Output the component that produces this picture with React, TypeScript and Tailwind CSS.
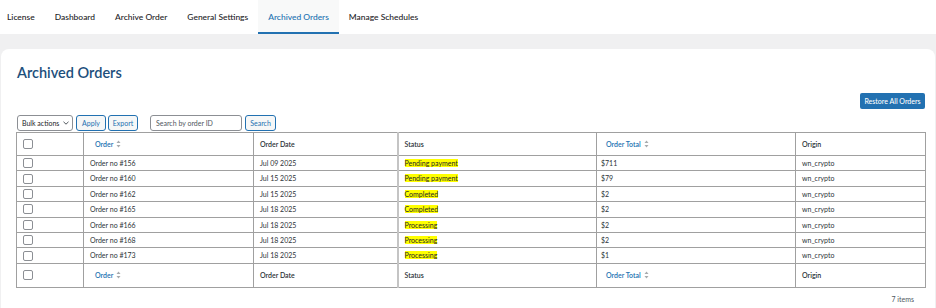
import React from "react";

const tabs = ["License", "Dashboard", "Archive Order", "General Settings", "Archived Orders", "Manage Schedules"];

const orders = [
  { id: 156, date: "Jul 09 2025", status: "Pending payment", total: "$711" },
  { id: 160, date: "Jul 15 2025", status: "Pending payment", total: "$79" },
  { id: 162, date: "Jul 15 2025", status: "Completed", total: "$2" },
  { id: 165, date: "Jul 18 2025", status: "Completed", total: "$2" },
  { id: 166, date: "Jul 18 2025", status: "Processing", total: "$2" },
  { id: 168, date: "Jul 18 2025", status: "Processing", total: "$2" },
  { id: 173, date: "Jul 18 2025", status: "Processing", total: "$1" },
];

const SortIcon = () => (
  <svg width="5" height="8" viewBox="0 0 5 8" className="inline-block ml-[3px] align-[-1px]">
    <path d="M2.5 0.5 L4.5 3 L0.5 3 Z" fill="#a7aaad" />
    <path d="M2.5 7.5 L4.5 5 L0.5 5 Z" fill="#a7aaad" />
  </svg>
);

const Checkbox = () => (
  <span className="block w-[10px] h-[10px] border border-[#8c8f94] rounded-[2px] bg-white" />
);

const HeadRow = ({ tall }: { tall: number }) => (
  <tr className={tall === 23 ? "h-[23px]" : "h-[24px]"}>
    <td className="border border-[#a0a0a0] pl-[6px] w-[67px]">
      <Checkbox />
    </td>
    <td className="border border-[#a0a0a0] pl-[11px] w-[170px] font-semibold text-[#2271b1]">
      Order
      <SortIcon />
    </td>
    <td className="border border-[#a0a0a0] pl-[6px] w-[144px] font-semibold">Order Date</td>
    <td className="border border-[#a0a0a0] border-l-2 border-l-[#c4c4c4] pl-[6px] w-[199px] font-semibold">Status</td>
    <td className="border border-[#a0a0a0] pl-[9px] w-[199px] font-semibold text-[#2271b1]">
      Order Total
      <SortIcon />
    </td>
    <td className="border border-[#a0a0a0] pl-[6px] w-[130px] font-semibold">Origin</td>
  </tr>
);

const App = () => {
  return (
    <div className="min-h-screen bg-[#f0f0f1] font-['Lato',sans-serif] text-[#1d2327]">
      <nav className="h-[34px] bg-white flex -ml-[3px]">
        {tabs.map((t) => (
          <div
            key={t}
            className={
              t === "Archived Orders"
                ? "px-[10px] flex items-center text-[8.45px] font-medium text-[#2271b1] bg-[#f8f9f9] border-b-2 border-[#2271b1] pt-[2px]"
                : "px-[10px] flex items-center text-[8.45px] font-medium text-[#1d2327]"
            }
          >
            {t}
          </div>
        ))}
      </nav>

      <div className="pt-[15px] pl-[1px] pr-[1px]">
        <div className="bg-white rounded-t-[8px] pl-[15px] pr-[10px] pt-[14px] min-h-[260px]">
          <h1 className="text-[14.5px] font-semibold text-[#1d4f7c] pl-[1px] leading-[20px]">Archived Orders</h1>

          <div className="flex justify-end mt-[10px]">
            <button className="h-[16px] w-[65px] rounded-[2px] bg-[#2271b1] text-white text-[7px] font-medium">
              Restore All Orders
            </button>
          </div>

          <div className="flex items-center mt-[6px] pl-[1px] h-[16px]">
            <div className="h-[16px] w-[56px] border border-[#8c8f94] rounded-[3px] flex items-center justify-between pl-[4px] pr-[3px] text-[7px]">
              <span>Bulk actions</span>
              <svg width="6" height="4" viewBox="0 0 6 4">
                <path d="M0.5 0.8 L3 3.2 L5.5 0.8" stroke="#3c434a" strokeWidth="0.9" fill="none" />
              </svg>
            </div>
            <button className="ml-[3px] h-[16px] w-[30px] border border-[#2271b1] rounded-[3px] bg-[#f6f7f7] text-[#2271b1] text-[7px]">
              Apply
            </button>
            <button className="ml-[2px] h-[16px] w-[30px] border border-[#2271b1] rounded-[3px] bg-[#f6f7f7] text-[#2271b1] text-[7px]">
              Export
            </button>
            <div className="ml-[12px] h-[16px] w-[92px] border border-[#8c8f94] rounded-[3px] flex items-center pl-[5px] text-[7px] text-[#50575e]">
              Search by order ID
            </div>
            <button className="ml-[3px] h-[16px] w-[31px] border border-[#2271b1] rounded-[3px] bg-[#f6f7f7] text-[#2271b1] text-[7px]">
              Search
            </button>
          </div>

          <table className="mt-[1px] w-[909px] border-collapse table-fixed text-[7px] text-[#2c3338]">
            <thead>
              <HeadRow tall={23} />
            </thead>
            <tbody>
              {orders.map((o) => (
                <tr key={o.id} className="h-[15.4px]">
                  <td className="border border-[#a0a0a0] pl-[6px]">
                    <Checkbox />
                  </td>
                  <td className="border border-[#a0a0a0] pl-[6px]">Order no #{o.id}</td>
                  <td className="border border-[#a0a0a0] pl-[6px]">{o.date}</td>
                  <td className="border border-[#a0a0a0] border-l-2 border-l-[#c4c4c4] pl-[6px]">
                    <span className="bg-[#ffff00] text-[#1d2327]">{o.status}</span>
                  </td>
                  <td className="border border-[#a0a0a0] pl-[4px]">{o.total}</td>
                  <td className="border border-[#a0a0a0] pl-[6px]">wn_crypto</td>
                </tr>
              ))}
            </tbody>
            <tfoot>
              <HeadRow tall={24} />
            </tfoot>
          </table>

          <div className="text-right pr-[11px] mt-[6px] text-[7px] text-[#50575e]">7 items</div>
        </div>
      </div>
    </div>
  );
};

export default App;
